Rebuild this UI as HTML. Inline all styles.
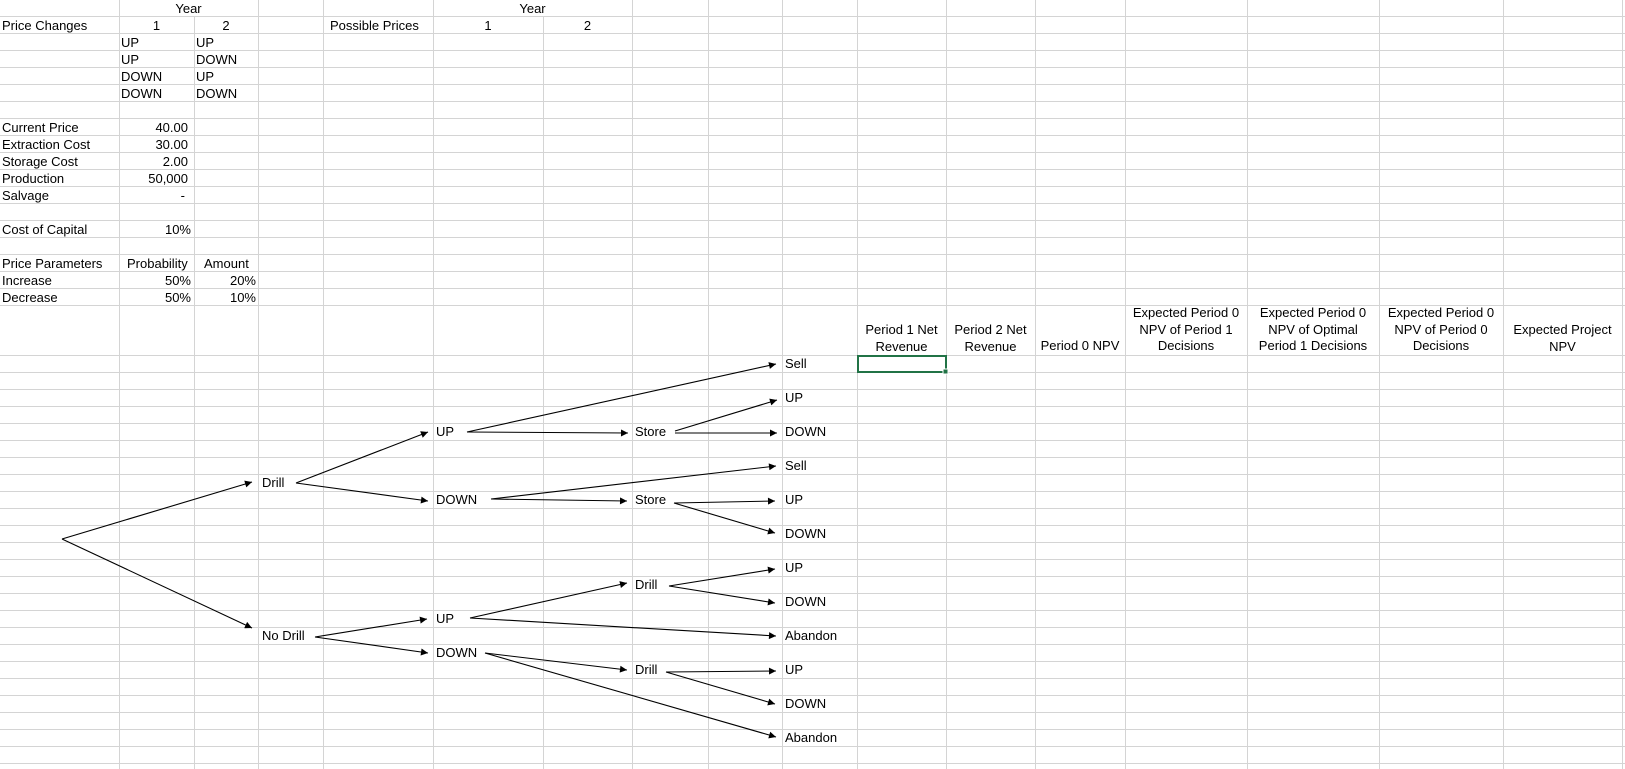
<!DOCTYPE html>
<html><head><meta charset="utf-8"><style>
body{margin:0;width:1625px;height:769px;overflow:hidden;background:#fff;font-family:"Liberation Sans",Arial,sans-serif;font-size:13px;color:#000;position:relative}
.t{position:absolute;white-space:nowrap;line-height:17px;height:17px}
.r{text-align:right}
.c{text-align:center}
.h{position:absolute;text-align:center;line-height:16.5px;bottom:auto}
svg{position:absolute;left:0;top:0}
</style></head><body>
<svg width="1625" height="769">
<g stroke="#d4d4d4" stroke-width="1" shape-rendering="crispEdges">
<script></script>
</g>
<g id="grid" stroke="#d4d4d4" stroke-width="1" shape-rendering="crispEdges">
<line x1="119.5" y1="0" x2="119.5" y2="769"/><line x1="194.5" y1="0" x2="194.5" y2="769"/><line x1="258.5" y1="0" x2="258.5" y2="769"/><line x1="323.5" y1="0" x2="323.5" y2="769"/><line x1="433.5" y1="0" x2="433.5" y2="769"/><line x1="543.5" y1="0" x2="543.5" y2="769"/><line x1="632.5" y1="0" x2="632.5" y2="769"/><line x1="708.5" y1="0" x2="708.5" y2="769"/><line x1="782.5" y1="0" x2="782.5" y2="769"/><line x1="857.5" y1="0" x2="857.5" y2="769"/><line x1="946.5" y1="0" x2="946.5" y2="769"/><line x1="1035.5" y1="0" x2="1035.5" y2="769"/><line x1="1125.5" y1="0" x2="1125.5" y2="769"/><line x1="1247.5" y1="0" x2="1247.5" y2="769"/><line x1="1379.5" y1="0" x2="1379.5" y2="769"/><line x1="1503.5" y1="0" x2="1503.5" y2="769"/><line x1="1622.5" y1="0" x2="1622.5" y2="769"/>
<line x1="0" y1="16.5" x2="1625" y2="16.5"/><line x1="0" y1="33.5" x2="1625" y2="33.5"/><line x1="0" y1="50.5" x2="1625" y2="50.5"/><line x1="0" y1="67.5" x2="1625" y2="67.5"/><line x1="0" y1="84.5" x2="1625" y2="84.5"/><line x1="0" y1="101.5" x2="1625" y2="101.5"/><line x1="0" y1="118.5" x2="1625" y2="118.5"/><line x1="0" y1="135.5" x2="1625" y2="135.5"/><line x1="0" y1="152.5" x2="1625" y2="152.5"/><line x1="0" y1="169.5" x2="1625" y2="169.5"/><line x1="0" y1="186.5" x2="1625" y2="186.5"/><line x1="0" y1="203.5" x2="1625" y2="203.5"/><line x1="0" y1="220.5" x2="1625" y2="220.5"/><line x1="0" y1="237.5" x2="1625" y2="237.5"/><line x1="0" y1="254.5" x2="1625" y2="254.5"/><line x1="0" y1="271.5" x2="1625" y2="271.5"/><line x1="0" y1="288.5" x2="1625" y2="288.5"/><line x1="0" y1="305.5" x2="1625" y2="305.5"/>
<line x1="0" y1="355.5" x2="1625" y2="355.5"/><line x1="0" y1="372.5" x2="1625" y2="372.5"/><line x1="0" y1="389.5" x2="1625" y2="389.5"/><line x1="0" y1="406.5" x2="1625" y2="406.5"/><line x1="0" y1="423.5" x2="1625" y2="423.5"/><line x1="0" y1="440.5" x2="1625" y2="440.5"/><line x1="0" y1="457.5" x2="1625" y2="457.5"/><line x1="0" y1="474.5" x2="1625" y2="474.5"/><line x1="0" y1="491.5" x2="1625" y2="491.5"/><line x1="0" y1="508.5" x2="1625" y2="508.5"/><line x1="0" y1="525.5" x2="1625" y2="525.5"/><line x1="0" y1="542.5" x2="1625" y2="542.5"/><line x1="0" y1="559.5" x2="1625" y2="559.5"/><line x1="0" y1="576.5" x2="1625" y2="576.5"/><line x1="0" y1="593.5" x2="1625" y2="593.5"/><line x1="0" y1="610.5" x2="1625" y2="610.5"/><line x1="0" y1="627.5" x2="1625" y2="627.5"/><line x1="0" y1="644.5" x2="1625" y2="644.5"/><line x1="0" y1="661.5" x2="1625" y2="661.5"/><line x1="0" y1="678.5" x2="1625" y2="678.5"/><line x1="0" y1="695.5" x2="1625" y2="695.5"/><line x1="0" y1="712.5" x2="1625" y2="712.5"/><line x1="0" y1="729.5" x2="1625" y2="729.5"/><line x1="0" y1="746.5" x2="1625" y2="746.5"/><line x1="0" y1="763.5" x2="1625" y2="763.5"/>
</g>
<rect x="0" y="0" width="119" height="16" fill="#fff"/>
<rect x="120" y="0" width="138" height="16" fill="#fff"/>
<rect x="434" y="0" width="198" height="16" fill="#fff"/>
<rect x="858" y="356" width="88" height="16" fill="none" stroke="#217346" stroke-width="2"/>
<rect x="943" y="369" width="5" height="5" fill="#217346" stroke="#fff" stroke-width="1"/>
<defs><marker id="a" viewBox="0 0 10 10" refX="10" refY="5" markerWidth="9" markerHeight="7" markerUnits="userSpaceOnUse" orient="auto"><path d="M0,0L10,5L0,10z" fill="#000"/></marker></defs>
<g stroke="#000" stroke-width="1.1" fill="none" marker-end="url(#a)">
<line x1="62" y1="539" x2="252" y2="482"/>
<line x1="62" y1="539" x2="252" y2="628"/>
<line x1="296" y1="483" x2="428" y2="432"/>
<line x1="296" y1="483" x2="428" y2="501"/>
<line x1="315" y1="637" x2="427" y2="619"/>
<line x1="315" y1="637" x2="428" y2="653"/>
<line x1="467" y1="432" x2="776" y2="364"/>
<line x1="467" y1="432" x2="628" y2="433"/>
<line x1="675" y1="431" x2="777" y2="400"/>
<line x1="675" y1="433" x2="777" y2="433"/>
<line x1="491" y1="499" x2="776" y2="466"/>
<line x1="491" y1="499" x2="627" y2="501"/>
<line x1="674" y1="503" x2="775" y2="501"/>
<line x1="674" y1="503" x2="775" y2="533"/>
<line x1="470" y1="618" x2="627" y2="583"/>
<line x1="470" y1="618" x2="776" y2="636"/>
<line x1="669" y1="586" x2="775" y2="569"/>
<line x1="669" y1="586" x2="775" y2="603"/>
<line x1="485" y1="653" x2="627" y2="670"/>
<line x1="485" y1="653" x2="776" y2="737"/>
<line x1="666" y1="672" x2="776" y2="671"/>
<line x1="666" y1="672" x2="775" y2="704"/>
</g>
</svg>

<div class="t c" style="left:119px;top:0;width:139px">Year</div>
<div class="t c" style="left:433px;top:0;width:199px">Year</div>
<div class="t" style="left:2px;top:17px">Price Changes</div>
<div class="t c" style="left:119px;top:17px;width:75px">1</div>
<div class="t c" style="left:194px;top:17px;width:64px">2</div>
<div class="t" style="left:330px;top:17px">Possible Prices</div>
<div class="t c" style="left:433px;top:17px;width:110px">1</div>
<div class="t c" style="left:543px;top:17px;width:89px">2</div>
<div class="t" style="left:121px;top:34px">UP</div><div class="t" style="left:196px;top:34px">UP</div>
<div class="t" style="left:121px;top:51px">UP</div><div class="t" style="left:196px;top:51px">DOWN</div>
<div class="t" style="left:121px;top:68px">DOWN</div><div class="t" style="left:196px;top:68px">UP</div>
<div class="t" style="left:121px;top:85px">DOWN</div><div class="t" style="left:196px;top:85px">DOWN</div>

<div class="t" style="left:2px;top:119px">Current Price</div><div class="t r" style="left:119px;top:119px;width:69px">40.00</div>
<div class="t" style="left:2px;top:136px">Extraction Cost</div><div class="t r" style="left:119px;top:136px;width:69px">30.00</div>
<div class="t" style="left:2px;top:153px">Storage Cost</div><div class="t r" style="left:119px;top:153px;width:69px">2.00</div>
<div class="t" style="left:2px;top:170px">Production</div><div class="t r" style="left:119px;top:170px;width:69px">50,000</div>
<div class="t" style="left:2px;top:187px">Salvage</div><div class="t r" style="left:119px;top:187px;width:66px">-</div>
<div class="t" style="left:2px;top:221px">Cost of Capital</div><div class="t r" style="left:119px;top:221px;width:72px">10%</div>
<div class="t" style="left:2px;top:255px">Price Parameters</div><div class="t" style="left:127px;top:255px">Probability</div><div class="t" style="left:204px;top:255px">Amount</div>
<div class="t" style="left:2px;top:272px">Increase</div><div class="t r" style="left:119px;top:272px;width:72px">50%</div><div class="t r" style="left:194px;top:272px;width:62px">20%</div>
<div class="t" style="left:2px;top:289px">Decrease</div><div class="t r" style="left:119px;top:289px;width:72px">50%</div><div class="t r" style="left:194px;top:289px;width:62px">10%</div>

<div class="h" style="left:857px;top:322px;width:89px">Period 1 Net<br>Revenue</div>
<div class="h" style="left:946px;top:322px;width:89px">Period 2 Net<br>Revenue</div>
<div class="h" style="left:1035px;top:338px;width:90px">Period 0 NPV</div>
<div class="h" style="left:1125px;top:305px;width:122px">Expected Period 0<br>NPV of Period 1<br>Decisions</div>
<div class="h" style="left:1247px;top:305px;width:132px">Expected Period 0<br>NPV of Optimal<br>Period 1 Decisions</div>
<div class="h" style="left:1379px;top:305px;width:124px">Expected Period 0<br>NPV of Period 0<br>Decisions</div>
<div class="h" style="left:1503px;top:322px;width:119px">Expected Project<br>NPV</div>

<div class="t" style="left:262px;top:474px">Drill</div>
<div class="t" style="left:262px;top:627px">No Drill</div>
<div class="t" style="left:436px;top:423px">UP</div>
<div class="t" style="left:436px;top:491px">DOWN</div>
<div class="t" style="left:436px;top:610px">UP</div>
<div class="t" style="left:436px;top:644px">DOWN</div>
<div class="t" style="left:635px;top:423px">Store</div>
<div class="t" style="left:635px;top:491px">Store</div>
<div class="t" style="left:635px;top:576px">Drill</div>
<div class="t" style="left:635px;top:661px">Drill</div>
<div class="t" style="left:785px;top:355px">Sell</div>
<div class="t" style="left:785px;top:389px">UP</div>
<div class="t" style="left:785px;top:423px">DOWN</div>
<div class="t" style="left:785px;top:457px">Sell</div>
<div class="t" style="left:785px;top:491px">UP</div>
<div class="t" style="left:785px;top:525px">DOWN</div>
<div class="t" style="left:785px;top:559px">UP</div>
<div class="t" style="left:785px;top:593px">DOWN</div>
<div class="t" style="left:785px;top:627px">Abandon</div>
<div class="t" style="left:785px;top:661px">UP</div>
<div class="t" style="left:785px;top:695px">DOWN</div>
<div class="t" style="left:785px;top:729px">Abandon</div>
</body></html>
